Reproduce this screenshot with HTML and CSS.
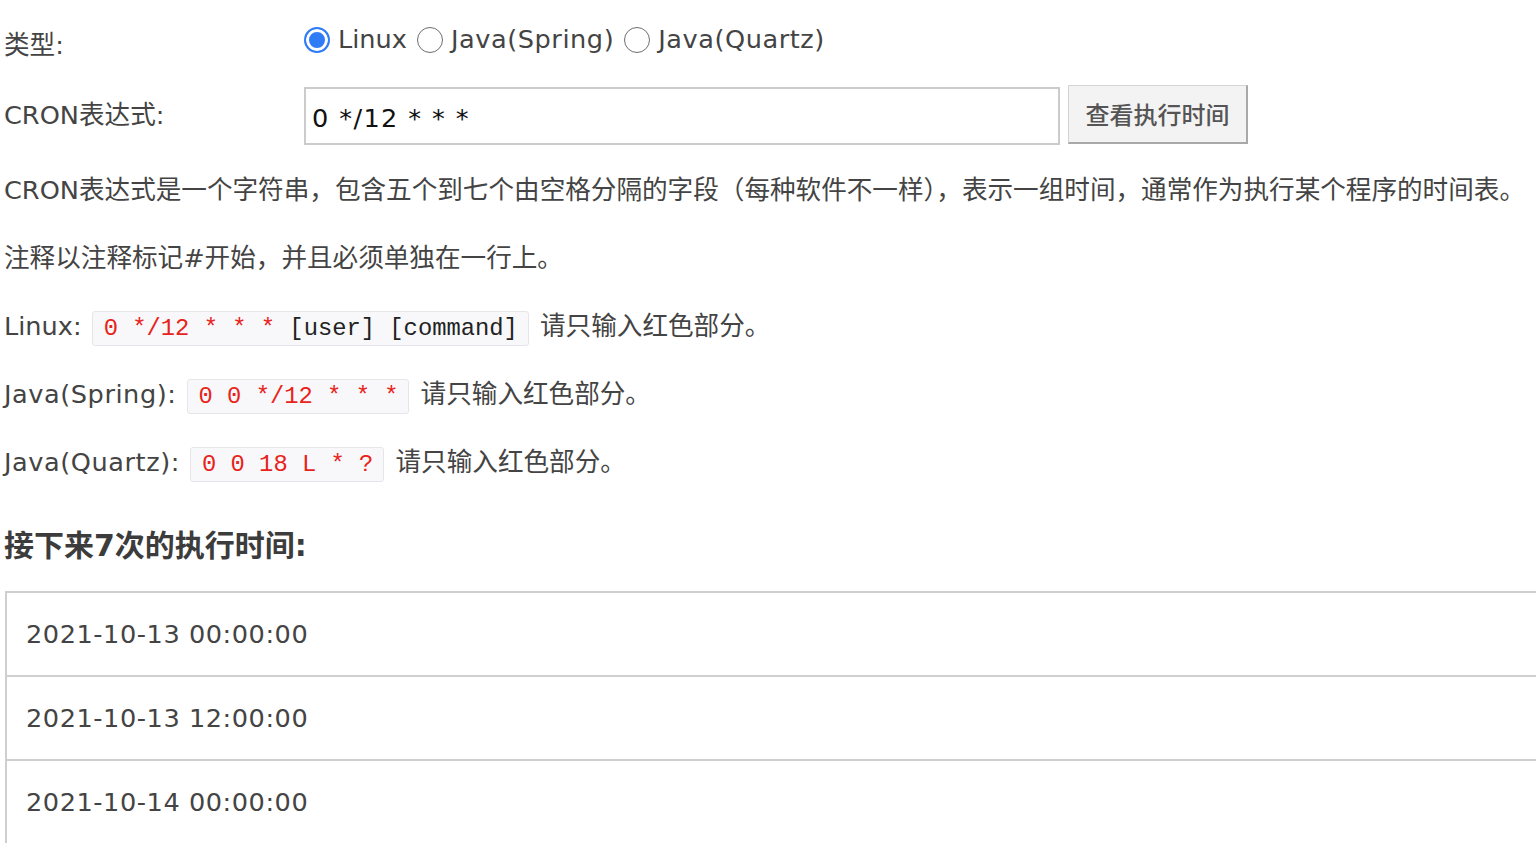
FILE: index.html
```html
<!DOCTYPE html>
<html lang="zh-CN">
<head>
<meta charset="utf-8">
<title>CRON表达式</title>
<link rel="stylesheet" href="styles.css">
</head>
<body>
<div class="page">
  <div class="form-row type-row">
    <div class="label">类型:</div>
    <div class="radios">
      <label class="radio"><input type="radio" name="type" checked><span>Linux</span></label>
      <label class="radio"><input type="radio" name="type"><span class="lat">Java(Spring)</span></label>
      <label class="radio"><input type="radio" name="type"><span class="lat">Java(Quartz)</span></label>
    </div>
  </div>
  <div class="form-row cron-row">
    <div class="label">CRON表达式:</div>
    <input class="cron-input" type="text" value="0 */12 * * *">
    <button class="btn" type="button">查看执行时间</button>
  </div>
  <p class="text">CRON表达式是一个字符串，包含五个到七个由空格分隔的字段（每种软件不一样），表示一组时间，通常作为执行某个程序的时间表。</p>
  <p class="text">注释以注释标记#开始，并且必须单独在一行上。</p>
  <p class="text">Linux: <code class="code"><span class="red">0 */12 * * *</span> [user] [command]</code> 请只输入红色部分。</p>
  <p class="text"><span class="lat">Java(Spring):</span> <code class="code"><span class="red">0 0 */12 * * *</span></code> 请只输入红色部分。</p>
  <p class="text"><span class="lat">Java(Quartz):</span> <code class="code"><span class="red">0 0 18 L * ?</span></code> 请只输入红色部分。</p>
  <h3 class="heading">接下来7次的执行时间:</h3>
  <div class="results">
    <div class="result-row">2021-10-13 00:00:00</div>
    <div class="result-row">2021-10-13 12:00:00</div>
    <div class="result-row">2021-10-14 00:00:00</div>
  </div>
</div>
</body>
</html>
```
FILE: styles.css
```css
html, body {
  margin: 0;
  padding: 0;
  background: #fff;
  overflow: hidden;
}
body {
  font-family: "DejaVu Sans", "Noto Sans CJK SC", sans-serif;
  font-size: 25.6px;
  color: #444;
}
.page {
  width: 1600px;
  padding: 0 0 0 4px;
}
.lat {
  letter-spacing: 0.55px;
}
.form-row {
  display: flex;
  align-items: center;
}
.label {
  width: 300px;
  flex: none;
}
.type-row {
  height: 50px;
  margin-top: 15px;
}
.type-row .label {
  position: relative;
  top: 2px;
}
.radios {
  display: flex;
  align-items: center;
  gap: 10px;
}
.radio {
  display: flex;
  align-items: center;
  gap: 8px;
  position: relative;
  top: -1px;
}
.radio input {
  appearance: none;
  -webkit-appearance: none;
  margin: 0;
  width: 26px;
  height: 26px;
  border-radius: 50%;
  border: 1.5px solid #6d6d6d;
  background: #fff;
  box-sizing: border-box;
  position: relative;
  top: 1px;
}
.radio input:checked {
  border: 2px solid #2f7cf6;
  background: #2f7cf6;
  box-shadow: inset 0 0 0 3px #fff;
}
.cron-row {
  margin-top: 20px;
}
.cron-row .label {
  position: relative;
  top: -3px;
}
.cron-input {
  box-sizing: border-box;
  width: 756px;
  height: 58px;
  border: 2px solid #cbcbcb;
  padding: 4px 6px 0;
  font-family: "DejaVu Sans", sans-serif;
  font-size: 25.6px;
  letter-spacing: 1.4px;
  color: #111;
  outline: none;
  margin: 2px 0 0 0;
}
.btn {
  margin-left: 8px;
  box-sizing: border-box;
  width: 180px;
  height: 59px;
  background: #f3f3f3;
  border: 1px solid #d4d4d4;
  border-right: 2px solid #a9a9a9;
  border-bottom: 2px solid #a9a9a9;
  font-family: "Noto Sans CJK SC", sans-serif;
  font-size: 24px;
  font-weight: 500;
  color: #555;
  padding: 0;
  position: relative;
  top: -1px;
}
.text {
  margin: 26px 0 0;
  line-height: 42px;
  white-space: nowrap;
}
.cron-row + .text {
  margin-top: 24px;
}
.code {
  display: inline-block;
  font-family: "Liberation Mono", monospace;
  font-size: 23.8px;
  line-height: 33px;
  padding: 0 10px 0 11px;
  background: #f8f8fa;
  border: 1px solid #e6e6ea;
  border-radius: 3px;
  color: #222;
  vertical-align: 0px;
  margin: 0 3px 0 2px;
}
.red {
  color: #e8231a;
}
.heading {
  margin: 43px 0 0;
  font-size: 30px;
  font-weight: bold;
  line-height: 40px;
  color: #3c3c3c;
}
.results {
  margin: 25px 0 0 1px;
  border-left: 2px solid #cfcfcf;
}
.result-row {
  height: 82px;
  border-top: 2px solid #cfcfcf;
  padding-left: 19px;
  display: flex;
  align-items: center;
  color: #444;
  letter-spacing: 0.55px;
}
```
